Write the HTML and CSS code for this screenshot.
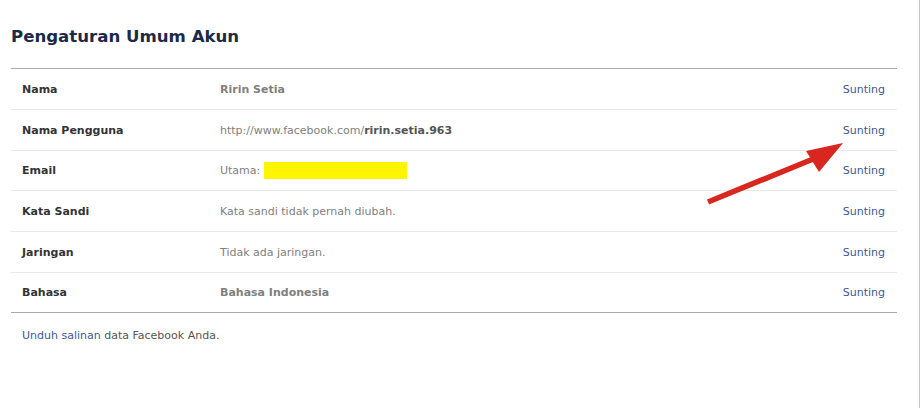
FILE: index.html
```html
<!DOCTYPE html>
<html>
<head>
    <meta charset="utf-8">
    <title>Pengaturan Umum Akun</title>
    <link rel="stylesheet" href="styles.css">
</head>
<body>
<div class="page">
    <h2 class="title">Pengaturan Umum Akun</h2>
    <ul class="settings">
        <li class="row">
            <span class="label">Nama</span>
            <span class="value strong">Ririn Setia</span>
            <a class="edit">Sunting</a>
        </li>
        <li class="row">
            <span class="label">Nama Pengguna</span>
            <span class="value">http://www.facebook.com/<b>ririn.setia.963</b></span>
            <a class="edit">Sunting</a>
        </li>
        <li class="row">
            <span class="label">Email</span>
            <span class="value">Utama: <i class="hidden-mail"></i></span>
            <a class="edit">Sunting</a>
        </li>
        <li class="row">
            <span class="label">Kata Sandi</span>
            <span class="value">Kata sandi tidak pernah diubah.</span>
            <a class="edit">Sunting</a>
        </li>
        <li class="row">
            <span class="label">Jaringan</span>
            <span class="value">Tidak ada jaringan.</span>
            <a class="edit">Sunting</a>
        </li>
        <li class="row">
            <span class="label">Bahasa</span>
            <span class="value strong">Bahasa Indonesia</span>
            <a class="edit">Sunting</a>
        </li>
    </ul>
    <p class="download"><a>Unduh salinan</a> data Facebook Anda.</p>

    <!-- panah merah -->
    <svg class="arrow" width="921" height="408" viewBox="0 0 921 408">
        <line x1="708" y1="202" x2="818" y2="157" stroke="#d8271e" stroke-width="5.5"/>
        <polygon points="843,143 806,151 819,172" fill="#d8271e"/>
    </svg>
</div>
</body>
</html>
```

FILE: styles.css
```css
*{ margin:0; padding:0}
html,body{ height:100%}
body{
    background:#fff;
    font-family:"DejaVu Sans", Tahoma, sans-serif;
    font-size:11px;
    color:#333;
}
.page{
    position:relative;
    height:100%;
    width:908px;
    padding-left:11px;
    border-right:1px solid #c4c4c4;
}
.title{
    font-size:16.6px; font-weight:bold;
    color:#1c2a47;
    line-height:20px;
    padding-top:27px;
    padding-bottom:21px;
}
.settings{
    list-style:none;
    width:886px;
    border-top:1px solid #aaa;
    border-bottom:1px solid #aaa;
}
.row{
    display:flex; align-items:center;
    height:38.67px;
    padding:1px 12px 0 11px;
    border-top:1px solid #e9e9e9;
}
.row:first-child{ border-top:none; height:39px}
.label{
    width:198px; flex:none;
    font-weight:bold; color:#333;
}
.value{
    flex:1;
    color:#808080;
    display:flex; align-items:center;
    white-space:pre;
}
.value.strong{ font-weight:bold}
.value b{ color:#555}
.hidden-mail{
    display:block;
    width:143px; height:17px;
    background:#fff500;
}
.edit{
    color:#3b5998;
    cursor:pointer;
}
.download{
    padding:16px 0 0 11px;
    color:#555;
}
.download a{ color:#3b5998; cursor:pointer}
.arrow{
    position:absolute; left:0; top:0;
    pointer-events:none;
}
```
